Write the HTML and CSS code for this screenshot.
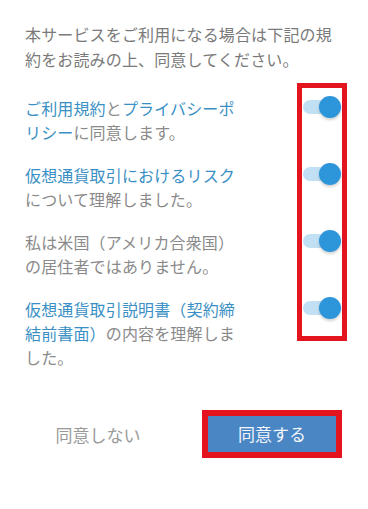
FILE: index.html
```html
<!DOCTYPE html>
<html lang="ja">
<head>
<meta charset="utf-8">
<link rel="stylesheet" href="styles.css">
</head>
<body>
<main class="dialog">
  <p class="intro">本サービスをご利用になる場合は下記の規約をお読みの上、同意してください。</p>
  <section class="agreements">
    <div class="items">
      <p class="item"><span class="link">ご利用規約</span>と<span class="link">プライバシーポリシー</span>に同意します。</p>
      <p class="item"><span class="link">仮想通貨取引におけるリスク</span>について理解しました。</p>
      <p class="item">私は米国（アメリカ合衆国）の居住者ではありません。</p>
      <p class="item"><span class="link">仮想通貨取引説明書（契約締結前書面）</span>の内容を理解しました。</p>
    </div>
    <div class="switch-panel">
      <span class="toggle"><span class="track"></span><span class="knob"></span></span>
      <span class="toggle"><span class="track"></span><span class="knob"></span></span>
      <span class="toggle"><span class="track"></span><span class="knob"></span></span>
      <span class="toggle"><span class="track"></span><span class="knob"></span></span>
    </div>
  </section>
  <div class="actions">
    <button class="btn-decline">同意しない</button>
    <div class="btn-frame"><button class="btn-agree">同意する</button></div>
  </div>
</main>
</body>
</html>
```

FILE: styles.css
```css
html, body {
  margin: 0;
  padding: 0;
  background: #ffffff;
}

body {
  font-family: "Noto Sans CJK JP", "Noto Sans", sans-serif;
  width: 368px;
  height: 509px;
  overflow: hidden;
}

.dialog {
  padding: 22px 23px 0 25px;
}

.intro {
  margin: 0;
  font-size: 16px;
  line-height: 25px;
  color: #7a7a7a;
  letter-spacing: 0.15px;
}

.agreements {
  display: flex;
  align-items: flex-start;
  margin-top: 11px;
}

.items {
  width: 220px;
  padding-top: 13px;
  display: flex;
  flex-direction: column;
  gap: 19px;
}

.item {
  margin: 0;
  font-size: 16px;
  line-height: 24px;
  color: #8a8a8a;
  letter-spacing: 0.15px;
}

.link {
  color: #3a90c4;
}

.switch-panel {
  margin-left: auto;
  margin-right: -2px;
  width: 50px;
  box-sizing: border-box;
  border: 5px solid #e3141e;
  padding: 7px 0 16px 1px;
  display: flex;
  flex-direction: column;
  gap: 43px;
}

.toggle {
  position: relative;
  display: block;
  width: 38px;
  height: 24px;
}

.track {
  position: absolute;
  left: 0;
  top: 5px;
  width: 30px;
  height: 14px;
  border-radius: 7px;
  background: #c2e0f4;
}

.knob {
  position: absolute;
  right: 0;
  top: 1px;
  width: 22px;
  height: 22px;
  border-radius: 50%;
  background: #2d95da;
  box-shadow: 0 2px 3px rgba(0, 0, 0, 0.18);
}

.actions {
  display: grid;
  grid-template-columns: 146px 140px;
  column-gap: 31px;
  margin-top: 41px;
  align-items: center;
}

.btn-decline {
  border: none;
  background: none;
  font-family: inherit;
  font-size: 17px;
  color: #9a9a9a;
  height: 48px;
  padding: 0;
}

.btn-frame {
  border: 6px solid #e3141e;
  border-top-width: 6px;
  height: 48px;
  box-sizing: border-box;
  display: flex;
}

.btn-agree {
  flex: 1;
  border: none;
  background: #4a86c4;
  color: #f2f6fb;
  font-family: inherit;
  font-size: 17px;
  padding: 0 0 2px;
}
```
